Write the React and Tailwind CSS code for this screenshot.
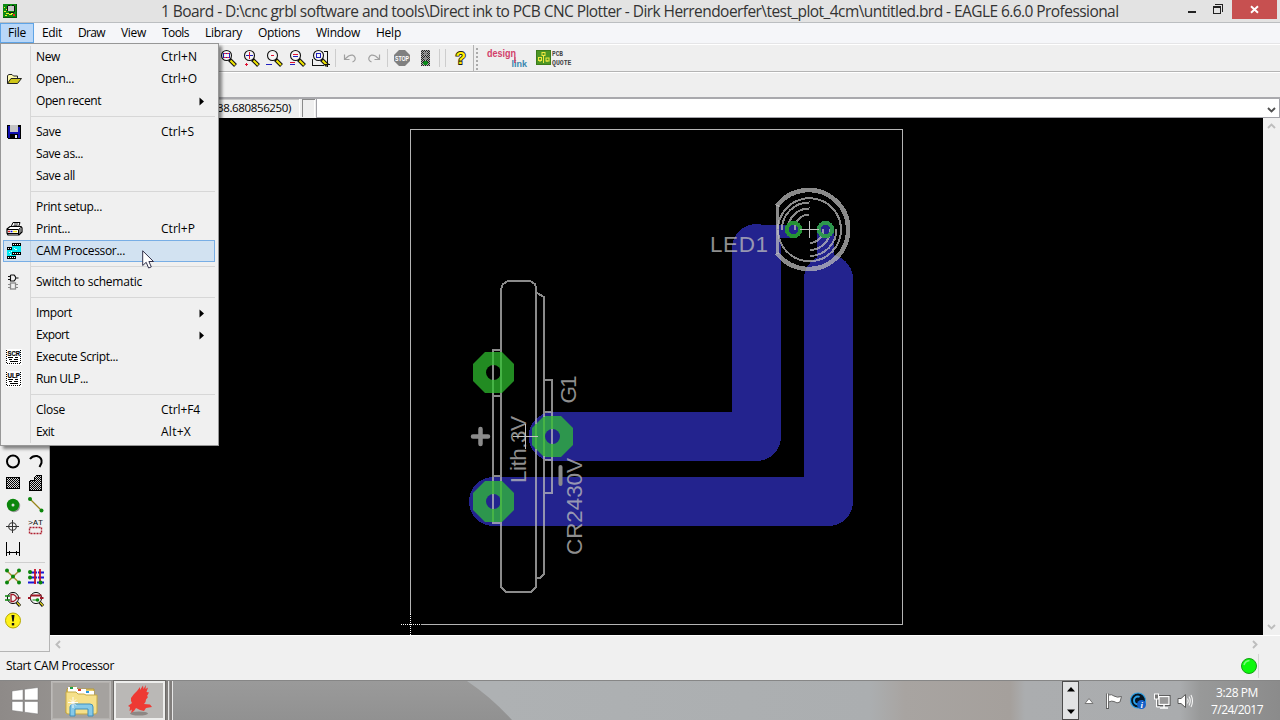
import { useLayoutEffect, useRef } from "react";

// Text stretched or tightened by letter spacing to an exact pixel width.
function Fit({ w, className = "", children }) {
  const ref = useRef(null);
  useLayoutEffect(() => {
    const el = ref.current;
    el.style.letterSpacing = "0px";
    const natural = el.getBoundingClientRect().width;
    el.style.letterSpacing = (w - natural) / String(children).length + "px";
  }, [w, children]);
  return (
    <span ref={ref} className={"inline-block whitespace-pre " + className}>
      {children}
    </span>
  );
}

function Svg({ w = 21, h = 21, crisp = false, className = "", children }) {
  return (
    <svg
      width={w}
      height={h}
      viewBox={`0 0 ${w} ${h}`}
      fill="none"
      shapeRendering={crisp ? "crispEdges" : "auto"}
      className={"block shrink-0 overflow-visible " + className}
    >
      {children}
    </svg>
  );
}

function Checker({ id, a = "#000", b = "#d8d8d8" }) {
  return (
    <pattern id={id} width="2" height="2" patternUnits="userSpaceOnUse">
      <rect width="2" height="2" fill={b} />
      <rect width="1" height="1" fill={a} />
      <rect x="1" y="1" width="1" height="1" fill={a} />
    </pattern>
  );
}

/* ---------- title bar ---------- */
function TitleBar() {
  return (
    <div className="flex h-[23px] shrink-0 border-b border-[#bbbec1] bg-[#e3e3e3]">
      <div className="w-[161px] pl-[3px] pt-[4px]">
        <Svg w={14} h={14} crisp>
          <rect width="14" height="14" fill="#0b8a12" />
          <path d="M0 13.500H14M13.500 0V14" stroke="#045a08" />
          <rect x="5" y="2" width="6" height="5" fill="#c9c9c9" />
          <path d="M4.500 2V7M5 1.500H7M9 1.500H11M11.500 2V8M6 8.500H11" stroke="#111" />
          <path d="M1 3h1v1h-1zM3 5h1v1h-1zM1 7h2v1h-2zM3 9h3v1h-3zM6 10h3v1h-3zM2 11h2v1h-2zM8 9h2v1h-2z" fill="#f4f02a" />
          <rect x="10" y="10" width="2" height="2" fill="#e22" />
        </Svg>
      </div>
      <div className="w-[1027px] text-[15.5px] leading-[23px] text-[#333]">
        <Fit w={957.5}>
          {"1 Board - D:\\cnc grbl software and tools\\Direct ink to PCB CNC Plotter - Dirk Herrendoerfer\\test_plot_4cm\\untitled.brd - EAGLE 6.6.0 Professional"}
        </Fit>
      </div>
      <Svg w={44} h={20} crisp>
        <rect x="0" y="11" width="8" height="2" fill="#222" />
        <path d="M27 4.500H34.500V12" stroke="#222" />
        <rect x="25.500" y="6.500" width="7" height="7" stroke="#222" />
        <rect x="25" y="6" width="8" height="2" fill="#222" />
      </Svg>
      <div className="flex h-[19px] w-[45px] items-center justify-center bg-[#c75050]">
        <Svg w={9} h={9}>
          <path d="M1 1.200L8 7.800M8 1.200L1 7.800" stroke="#fff" strokeWidth="1.900" />
        </Svg>
      </div>
    </div>
  );
}

/* ---------- menu bar ---------- */
const menus = [
  ["File", 34, 18],
  ["Edit", 36, 20],
  ["Draw", 43, 27],
  ["View", 41, 25],
  ["Tools", 43, 27],
  ["Library", 53, 37],
  ["Options", 58, 42],
  ["Window", 60, 44],
  ["Help", 41, 25],
];

function MenuBar() {
  return (
    <div className="flex h-[21px] shrink-0 border-b border-[#e5e5e7] bg-[#f5f6f9] text-[12px]">
      {menus.map(([name, w, tw], i) => (
        <div
          key={name}
          className={
            "flex h-[20px] items-center justify-center " +
            (i === 0 ? "border border-[#5fa4e6] bg-[#b9d7f8]" : "")
          }
          style={{ width: w }}
        >
          <Fit w={tw}>{name}</Fit>
        </div>
      ))}
    </div>
  );
}

/* ---------- toolbar ---------- */
function Lens({ children }) {
  return (
    <Svg w={23} h={21}>
      <g>
        <path d="M12.500 11.500L18.500 17.500" stroke="#111" strokeWidth="4" />
        <path d="M13.500 12.500L18 17" stroke="#f2e600" strokeWidth="1.900" />
        <circle cx="9.500" cy="7.500" r="5" fill="#f4f4f4" stroke="#111" strokeWidth="1.100" />
      </g>
      <g shapeRendering="crispEdges">{children}</g>
    </Svg>
  );
}

function Divider({ className = "" }) {
  return <div className={"h-[18px] w-px shrink-0 bg-[#cdcdcd] " + className} />;
}

function Toolbar() {
  return (
    <div className="flex h-[28px] shrink-0 items-center border-b border-t border-b-[#b4b4b4] border-t-white bg-[#efefef] pl-[217px]">
      <Lens>
        <rect x="6.500" y="5.500" width="6" height="4" stroke="#2020c0" />
        <path d="M7 5.500H12M7 9.500H12" stroke="#e02050" strokeDasharray="2 1" />
      </Lens>
      <Lens>
        <path d="M6 7.500H13" stroke="#2020c0" />
        <path d="M9.500 4V11M5 16.500H8M6.500 15V18" stroke="#e01030" />
      </Lens>
      <Lens>
        <path d="M8 7.500H11" stroke="#e01030" />
        <path d="M3 16.500H9" stroke="#2020c0" />
      </Lens>
      <Lens>
        <path d="M7 6.500H12M4 14.500H9" stroke="#e01030" />
        <path d="M7 8.500H12M4 16.500H9" stroke="#2020c0" />
      </Lens>
      <Lens>
        <path d="M3.500 11V17.500H15M15 3.500H18.500V16" stroke="#111" />
        <rect x="7.500" y="5.500" width="4" height="4" stroke="#2020c0" />
        <path d="M16 16h5v1h-5zM18 14h1v5h-1z" fill="#111" />
      </Lens>
      <Divider className="ml-[3px]" />
      <Svg w={24} h={20} className="ml-[2px]">
        <path d="M6.500 6.500V11.500H11.500M7 11L10.500 8Q15.500 5.500 17 9.500Q18 12.500 14.500 14" stroke="#a0a0a0" strokeWidth="1.200" />
      </Svg>
      <Svg w={24} h={20}>
        <path d="M17.500 6.500V11.500H12.500M17 11L13.500 8Q8.500 5.500 7 9.500Q6 12.500 9.500 14" stroke="#a0a0a0" strokeWidth="1.200" />
      </Svg>
      <Divider className="ml-px" />
      <Svg w={18} h={18} className="ml-[5px]">
        <path d="M6 1H12L17 6V12L12 17H6L1 12V6Z" fill="#808080" />
        <text x="2" y="11.500" fontSize="7" fontWeight="700" textLength="14" lengthAdjust="spacingAndGlyphs" fill="#fff" fontFamily="Liberation Sans, sans-serif">STOP</text>
      </Svg>
      <Svg w={9} h={18} crisp className="ml-[10px]">
        <defs><Checker id="tl" a="#222" b="#aaa" /></defs>
        <rect y="1" width="9" height="16" fill="url(#tl)" />
        <rect x="3" y="3" width="3" height="3" fill="#888" />
        <rect x="3" y="8" width="3" height="3" fill="#888" />
        <path d="M3 12h3v1h1v2h-1v1h-3v-1h-1v-2h1z" fill="#0a8a1a" />
      </Svg>
      <Divider className="ml-[9px]" />
      <Divider className="ml-[5px]" />
      <Svg w={14} h={18} className="ml-[8px]">
        <text x="1.500" y="15" fontSize="17" fontWeight="700" fill="#fff000" stroke="#1a1a1a" strokeWidth="1.800" paintOrder="stroke" fontFamily="Liberation Sans, sans-serif">?</text>
      </Svg>
      <div className="ml-[5px] h-full w-px bg-[#b4b4b4]" />
      <Svg w={4} h={26} crisp className="ml-[2px]">
        <path d="M1 3V25" stroke="#aaa" strokeWidth="2" strokeDasharray="2 2" />
      </Svg>
      <Svg w={44} h={24} className="ml-[7px]">
        <text x="0" y="11" fontSize="11" fontWeight="700" textLength="29" lengthAdjust="spacingAndGlyphs" fill="#d2406a" fontFamily="Liberation Sans, sans-serif">design</text>
        <text x="24.500" y="20.500" fontSize="9.500" fontWeight="700" textLength="15.500" lengthAdjust="spacingAndGlyphs" fill="#3a87b0" fontFamily="Liberation Sans, sans-serif">link</text>
        <path d="M27.900 11V17" stroke="#cd3a63" strokeWidth="1.500" />
      </Svg>
      <Svg w={38} h={18} className="ml-[5px]">
        <rect x="0.500" y="1.500" width="14" height="14" fill="#4c9624" stroke="#3c7c1a" />
        <path d="M4 13V10.500M7.500 14V6M11 13V11" stroke="#f0e840" />
        <rect x="2.500" y="8.500" width="3" height="3" stroke="#f0e840" />
        <rect x="6" y="3.500" width="3" height="3" stroke="#f0e840" />
        <rect x="10" y="9" width="3" height="3" stroke="#f0e840" />
        <text x="16" y="7" fontSize="7" fontWeight="700" textLength="11" lengthAdjust="spacingAndGlyphs" fill="#444" fontFamily="Liberation Mono, monospace">PCB</text>
        <text x="16" y="16" fontSize="7" fontWeight="700" textLength="19.500" lengthAdjust="spacingAndGlyphs" fill="#444" fontFamily="Liberation Mono, monospace">QUOTE</text>
      </Svg>
    </div>
  );
}

function Chevron({ dir, color = "#bdbdbd" }) {
  const d = {
    up: "M1 6L4.500 2.500L8 6",
    down: "M1 3L4.500 6.500L8 3",
    left: "M6 1L2.500 4.500L6 8",
    right: "M3 1L6.500 4.500L3 8",
  }[dir];
  return (
    <Svg w={9} h={9}>
      <path d={d} stroke={color} strokeWidth="1.900" />
    </Svg>
  );
}

function CommandRow() {
  return (
    <div className="flex h-[21px] shrink-0 border-t-2 border-[#a9a9ad] bg-[#efefef] pl-[50px]">
      <div className="flex h-[18px] w-[250px] items-center justify-end border-r border-[#fff] pr-[8px] shadow-[inset_0_1px_#c8c8c8]">
        <Fit w={74} className="text-[11.5px]">38.680856250)</Fit>
      </div>
      <div className="ml-[2px] h-[18px] w-[13px] border-l border-t border-[#8a8a8a] shadow-[inset_-1px_0_#fff]" />
      <div className="ml-px flex h-[19px] flex-1 items-center justify-end border-b border-l border-r border-[#a3a3a9] bg-white pr-[3px] pt-[2px]">
        <Chevron dir="down" color="#505050" />
      </div>
    </div>
  );
}

/* ---------- tool palette ---------- */
function Palette() {
  return (
    <div className="flex w-[50px] shrink-0 flex-col justify-end border-b border-r border-[#b5b5b5] bg-[#f0f0f0] pb-[19px]">
      <div className="grid auto-rows-[22px] grid-cols-[23px_23px] pl-[3px]">
        <Svg><circle cx="10" cy="10.500" r="6" stroke="#000" strokeWidth="2" /></Svg>
        <Svg>
          <path d="M4 8Q6.500 4.500 11 5Q16.500 6.500 15.500 12L13.500 16" stroke="#000" strokeWidth="2" />
        </Svg>
        <Svg crisp>
          <defs><Checker id="ck" /></defs>
          <rect x="3.500" y="4.500" width="13" height="11" fill="url(#ck)" stroke="#000" />
        </Svg>
        <Svg crisp>
          <path d="M3.500 8.500L5.500 7.500H8.500V4.500L10.500 2.500H15.500V17.500H3.500Z" fill="url(#ck)" stroke="#000" />
        </Svg>
        <Svg>
          <circle cx="11" cy="11" r="6.200" fill="#999" />
          <circle cx="10" cy="10" r="6.200" fill="#0c860c" />
          <circle cx="10" cy="10" r="1.500" fill="#ddd" />
        </Svg>
        <Svg>
          <path d="M4 4L15.500 15.500" stroke="#98851a" strokeWidth="1.300" />
          <circle cx="4" cy="4" r="2" fill="#0c860c" />
          <circle cx="15.500" cy="15.500" r="2" fill="#0c860c" />
        </Svg>
        <Svg>
          <circle cx="9.500" cy="9.500" r="3.800" stroke="#333" strokeWidth="1.100" />
          <path d="M3 9.500H16M9.500 3V16" stroke="#333" />
        </Svg>
        <Svg>
          <text x="2" y="8" fontSize="7.500" textLength="15" lengthAdjust="spacingAndGlyphs" fill="#111" fontFamily="Liberation Mono, monospace">&gt;AT</text>
          <rect x="3.500" y="10.500" width="12" height="6" stroke="#b02030" strokeWidth="1.400" strokeDasharray="2 1" />
        </Svg>
        <Svg crisp>
          <path d="M3.500 2.500V16.500M16.500 2.500V16.500M4 13.500H16M6.500 11.500V15.500M13.500 11.500V15.500" stroke="#000" />
        </Svg>
      </div>
      <div className="mb-[3px] ml-[5px] mt-px h-px w-[40px] bg-[#cfcfcf]" />
      <div className="grid auto-rows-[22px] grid-cols-[23px_23px] pl-[2px]">
        <Svg>
          <path d="M5 5L17 16.500M17 5L5 16.500" stroke="#a58b30" strokeWidth="1.400" />
          <g fill="#0c860c">
            <circle cx="5" cy="4.500" r="2" /><circle cx="17" cy="4.500" r="2" />
            <circle cx="11" cy="10.500" r="2" />
            <circle cx="5" cy="16.500" r="2" /><circle cx="17" cy="16.500" r="2" />
          </g>
        </Svg>
        <Svg>
          <path d="M4 6.500H19M4 11.500H19M3 16.500H19" stroke="#1818d8" strokeWidth="1.800" strokeDasharray="8 1" />
          <path d="M10 3V18M15 3V18" stroke="#c8102a" strokeWidth="1.800" />
          <circle cx="5" cy="6" r="2" fill="#0c860c" /><circle cx="5" cy="11.500" r="2" fill="#0c860c" /><circle cx="15.500" cy="16.500" r="2" fill="#0c860c" />
        </Svg>
        <Svg>
          <path d="M14.500 14L18 18" stroke="#111" strokeWidth="3" /><path d="M15 14.500L18 17.500" stroke="#e8d820" strokeWidth="1.300" />
          <circle cx="11" cy="10" r="5.600" fill="#f4f4f4" stroke="#111" />
          <path d="M3 8H8M3 12H8" stroke="#0c860c" strokeWidth="1.400" />
          <path d="M9 6.500H11.500Q14.500 8 14.500 10Q14.500 12 11.500 13.500H9ZM14.500 10H18.500" stroke="#a01828" strokeWidth="1.300" />
        </Svg>
        <Svg>
          <path d="M14.500 14L18 18" stroke="#111" strokeWidth="3" /><path d="M15 14.500L18 17.500" stroke="#e8d820" strokeWidth="1.300" />
          <circle cx="11" cy="10" r="5.600" fill="#f4f4f4" stroke="#111" />
          <path d="M5.500 7.500H16.500M3 10H6M15 10H18.500" stroke="#a01828" strokeWidth="2" />
          <circle cx="12.500" cy="12" r="1.800" fill="#0c860c" /><path d="M7.500 12H12" stroke="#0c860c" />
        </Svg>
        <Svg>
          <circle cx="11" cy="10.500" r="7.500" fill="#fff21a" stroke="#b5a800" />
          <path d="M9.500 5H12.500L11.700 11.500H10.300Z" fill="#111" />
          <rect x="9.800" y="13" width="2.400" height="2.400" fill="#111" />
        </Svg>
      </div>
    </div>
  );
}

/* ---------- board drawing ---------- */
function octagon(cx, cy, r) {
  const k = r * 0.4142;
  return [[-k, -r], [k, -r], [r, -k], [r, k], [k, r], [-k, r], [-r, k], [-r, -k]]
    .map(([x, y]) => `${cx + x},${cy + y}`)
    .join(" ");
}

function Pad({ x, y, fill, hole }) {
  return (
    <g>
      <polygon points={octagon(x, y, 20.5)} fill={fill} />
      <circle cx={x} cy={y} r="7.500" fill={hole} />
    </g>
  );
}

function Label({ x, y, w, turn = true, children }) {
  return (
    <text
      transform={`translate(${x} ${y})` + (turn ? " rotate(-90)" : "")}
      fontSize="22.500"
      textLength={w}
      fill="#bebebe"
      fillOpacity="0.750"
      fontFamily="Liberation Sans, sans-serif"
    >
      {children}
    </text>
  );
}

function Board() {
  return (
    <svg width="1213" height="517" viewBox="50 118 1213 517" fill="none" className="block shrink-0 bg-black">
      <rect x="410.500" y="129.500" width="492" height="495" stroke="#b4b4b4" />
      <g stroke="#23238e" strokeLinecap="round" strokeLinejoin="round" shapeRendering="crispEdges">
        <path d="M553 436.500H756.500V248.500" strokeWidth="49" />
        <path d="M493.500 501.500H828.500V279" strokeWidth="49" />
        <path d="M757 231.500H793" strokeWidth="13" />
        <path d="M825.500 230V279" strokeWidth="17" />
      </g>

      <Pad x={493.5} y={372.5} fill="#228b22" hole="#000" />
      <Pad x={552.5} y={436.5} fill="#2d964d" hole="#23238e" />
      <Pad x={493.5} y={501.5} fill="#2d964d" hole="#23238e" />

      <g stroke="#bebebe" strokeOpacity="0.730" strokeWidth="2" shapeRendering="crispEdges">
        <path d="M501 289L503 284L508 281H530L535 284L536 288V587L531 592H506L501 587Z" />
        <path d="M537 293L544 297V574L540 578H537" />
        <path d="M500 350H493V523H500M494 396H500M494 476H500" />
        <path d="M545 380H552V493H545M545 412H551M545 460H551" />
      </g>
      <g stroke="#46b446" strokeWidth="2" shapeRendering="crispEdges">
        <path d="M493 352V365M493 380V393M501 352V393" />
        <path d="M493 481V494M493 509V522M501 481V522" />
        <path d="M536 424V449M544 417V456M552 416V429M552 444V457" />
      </g>
      <g stroke="#8b8b8b" strokeLinecap="round">
        <path d="M473 436.500H488M480.500 429V444" strokeWidth="4.500" />
        <path d="M560.500 467V484" strokeWidth="4" />
      </g>
      <path d="M513 436.500H538M525.500 424V449" stroke="#c4c4c4" shapeRendering="crispEdges" />

      <Label x={526} y={483} w={67}>Lith.3V</Label>
      <Label x={576} y={403.500} w={28}>G1</Label>
      <Label x={582} y={555} w={97}>CR2430V</Label>
      <Label x={710} y={252} w={58} turn={false}>LED1</Label>

      <g stroke="#bebebe" strokeOpacity="0.730" shapeRendering="crispEdges">
        <path d="M777 206A39.500 39.500 0 1 1 777 253" strokeWidth="4.500" />
        <path d="M777 205V254" strokeWidth="3" />
        <path d="M778 229.500A31.500 31.500 0 1 1 778 230" strokeWidth="2" />
        <path d="M782 230A27 27 0 0 1 809.500 202.500M788 230A21 21 0 0 1 809.500 208.500M794.500 230A15 15 0 0 1 809.500 214.500" strokeWidth="2" />
        <path d="M836.500 229A27 27 0 0 1 809.500 256M830.500 229A21 21 0 0 1 809.500 250M823.500 229A14 14 0 0 1 809.500 243" strokeWidth="2" />
      </g>
      <circle cx="793.500" cy="229.500" r="6.700" stroke="#259235" strokeWidth="3.800" shapeRendering="crispEdges" />
      <circle cx="825.500" cy="229.500" r="6.700" stroke="#2d964d" strokeWidth="3.800" shapeRendering="crispEdges" />
      <path d="M800 229.500H819M809.500 221V238" stroke="#c4c4c4" shapeRendering="crispEdges" />
      <path d="M401 624.500H421M410.500 614V635" stroke="#000" shapeRendering="crispEdges" />
      <path d="M401 624.500H421M410.500 614V635" stroke="#fff" strokeDasharray="1 1" shapeRendering="crispEdges" />
    </svg>
  );
}

function Workspace() {
  return (
    <div className="flex flex-1 flex-col">
      <div className="flex h-[517px]">
        <Board />
        <div className="flex w-[17px] flex-col items-center justify-between bg-[#f0f0f0] py-[4px]">
          <Chevron dir="up" />
          <Chevron dir="down" />
        </div>
      </div>
      <div className="flex h-[17px] items-center justify-between border-t border-white bg-[#f0f0f0] pl-[4px] pr-[21px]">
        <Chevron dir="left" />
        <Chevron dir="right" />
      </div>
    </div>
  );
}

function StatusBar() {
  return (
    <div className="flex h-[28px] shrink-0 items-center justify-between bg-[#f0f0f0] pl-[6px] pr-[21px]">
      <Fit w={108} className="text-[12px]">Start CAM Processor</Fit>
      <div className="flex h-[24px] items-center border-r border-[#d5d5d5]">
        <Svg w={18} h={18}>
          <circle cx="9" cy="9" r="7.500" fill="#0cf80c" stroke="#16a016" />
          <path d="M4 8Q5 4 9.500 3.500" stroke="#7dff7d" strokeWidth="1.500" />
        </Svg>
      </div>
    </div>
  );
}

/* ---------- task bar ---------- */
function Taskbar() {
  return (
    <div className="flex h-[40px] shrink-0 border-t border-[#868686] bg-[linear-gradient(90deg,#8e8a88_0px,#9b9895_110px,#989796_172px,#aeb1b3_300px,#aeb1b3_494px,#abaeb0_870px,#a8a4a1_905px,#a5a09c_1010px,#abadaf_1025px,#aaacae_1180px,#989999_1200px,#8b8b8b_1280px)]">
      <div className="flex w-[51px] items-center pl-[11px]">
        <Svg w={28} h={28}>
          <path d="M1 4L12 2.500V13H1ZM13.500 2.300L27 0.500V13H13.500ZM1 14.500H12V25L1 23.500ZM13.500 14.500H27V27L13.500 25.200Z" fill="#fff" stroke="#777" strokeWidth="0.500" />
        </Svg>
      </div>
      <div className="flex w-[60px] items-center justify-center border border-[#bcbab8] bg-[#a5a29f] shadow-[inset_0_0_0_1px_#b4b1ae]">
        <Svg w={34} h={32}>
          <path d="M3 4L5 2H12L14 4H30V28H2Z" fill="#e8cc66" stroke="#b59a3a" />
          <path d="M4 2H13V7H4Z" fill="#fff" /><rect x="6" y="2" width="3" height="2" fill="#18a048" />
          <path d="M12 4H22V9H12Z" fill="#fff" /><rect x="14" y="4" width="3" height="2" fill="#d83828" />
          <path d="M20 6H30V10H20Z" fill="#fff" /><rect x="22" y="6" width="3" height="2" fill="#2898e0" />
          <path d="M2 7H12L14 9H20L22 10H33V27Q33 29 31 29H4Q2 29 2 27Z" fill="#f6e08a" stroke="#c7a944" />
          <path d="M6 31V22Q6 19 9 19H26Q29 19 29 22V31H24V24H11V31Z" fill="#85c9e8" stroke="#3f8fbd" />
          <path d="M9 12V23M4 17.500H14M6 14.500L12 20.500M12 14.500L6 20.500" stroke="#fff" strokeWidth="0.900" />
        </Svg>
      </div>
      <div className="ml-[3px] flex w-[51px] items-center justify-center border-2 border-[#ededec] bg-[#bab8b6] shadow-[0_0_0_1px_#6c6a68]">
        <Svg w={26} h={34}>
          <ellipse cx="12" cy="29.500" rx="9" ry="2" fill="#8d8784" />
          <path d="M4 14L7 10L10 7L13 3L13 6L16 1.500L16.500 5L19 1L18.500 5L21 3.500L19.500 8L22 8.500L20 12L21 13L19 15.500L18.500 18L17 20L23 20.500L25 23L19 24L17 27L13 26L9 24L7 27L4 29L5 25.500L2.500 27L3 23L1 22L5 19L4 17Z" fill="#ee3a34" />
        </Svg>
      </div>
      <div className="ml-px w-[3px] border-r border-[#e6e6e6] bg-[#817e7c]" />
      <div className="ml-px w-[3px] border-r border-[#e6e6e6] bg-[#817e7c]" />
      <div className="flex-1">
        <Svg w={345} h={39}>
          <defs>
            <linearGradient id="shade" x1="0" y1="0" x2="0" y2="1">
              <stop offset="0" stopColor="#9a9a9a" />
              <stop offset="1" stopColor="#919191" />
            </linearGradient>
          </defs>
          <path d="M0 0H294Q318 16 339 39H0Z" fill="url(#shade)" />
        </Svg>
      </div>
      <div className="flex w-[17px] shrink-0 flex-col items-center justify-between border border-[#4c4c4c] bg-[#e2e3e4] py-[4px]">
        <Svg w={8} h={6}><path d="M0 5.500H8L4 1Z" fill="#000" /></Svg>
        <Svg w={8} h={6}><path d="M0 0.500H8L4 5Z" fill="#000" /></Svg>
      </div>
      <div className="flex w-[116px] shrink-0 items-center pl-[5px]">
        <Svg w={10} h={8}><path d="M1 6.500H9L5 1.500Z" fill="#fff" stroke="#777" /></Svg>
        <Svg w={18} h={18} className="ml-[11px]">
          <path d="M2.500 1.500V17" stroke="#5b5b5b" strokeWidth="3" />
          <path d="M3.500 3Q7 2 9 4Q12 6 16.500 4.500L15 10Q12 12 9 9.500Q7 8.500 3.500 10Z" fill="#fff" stroke="#666" />
          <path d="M2.500 1.500V16" stroke="#fff" strokeWidth="1.200" />
        </Svg>
        <Svg w={18} h={18} className="ml-[6px]">
          <circle cx="9" cy="8.500" r="7.500" fill="#061522" stroke="#2aa0e8" strokeWidth="1.200" />
          <circle cx="9" cy="8.500" r="4" stroke="#2aa0e8" strokeWidth="2" strokeDasharray="20 4" />
          <circle cx="12.500" cy="12.500" r="4.500" fill="#1560c8" />
          <text x="11.500" y="15.500" fontSize="9" fontWeight="700" fontStyle="italic" fill="#fff" fontFamily="Liberation Serif, serif">i</text>
        </Svg>
        <Svg w={18} h={18} className="ml-[6px]">
          <rect x="6" y="4.500" width="10" height="8" fill="#8b8b8b" stroke="#444" strokeWidth="3" />
          <rect x="6" y="4.500" width="10" height="8" fill="#999" stroke="#fff" strokeWidth="1.300" />
          <path d="M11 13V16M7 16H15" stroke="#fff" strokeWidth="1.500" />
          <rect x="1.500" y="2" width="4" height="5" fill="#777" stroke="#fff" /><path d="M3.500 7V15H7" stroke="#fff" />
        </Svg>
        <Svg w={18} h={18} className="ml-[6px]">
          <path d="M1 6.500H4L8.500 2.500V15.500L4 11.500H1Z" fill="#fff" stroke="#5b5b5b" />
          <path d="M10.500 6.500Q12 9 10.500 11.500M12 4.500Q14.500 9 12 13.500M14 3Q17 9 14 15" stroke="#f4f4f4" strokeWidth="1.100" />
        </Svg>
      </div>
      <div className="flex w-[85px] shrink-0 flex-col items-center pr-px pt-[3px] text-[12px] leading-[17px] text-white">
        <Fit w={42}>3:28 PM</Fit>
        <Fit w={52}>7/24/2017</Fit>
      </div>
    </div>
  );
}

/* ---------- File menu ---------- */
function ScriptIcon({ name }) {
  return (
    <Svg w={16} h={16} crisp>
      <rect width="16" height="16" fill="#fff" />
      <path d="M0.500 1V15M14.500 1V15" stroke="#000" strokeDasharray="1 1" />
      <path d="M1 14.500H15" stroke="#000" strokeDasharray="1 1" />
      <path d="M2 8.500H7M9 8.500H12M3 10.500H6M8 10.500H12M4 12.500H12" stroke="#000" />
      <text x="1.500" y="7" fontSize="8" fontWeight="700" textLength="12.500" lengthAdjust="spacingAndGlyphs" fill="#000" stroke="#000" strokeWidth="0.200" fontFamily="Liberation Sans, sans-serif">{name}</text>
    </Svg>
  );
}

const icons = {
  open: (
    <Svg w={16} h={16}>
      <path d="M1.500 12.500V4.500L3 3.500H6L7.500 5H11.500V7" fill="#fffbb0" stroke="#222" />
      <path d="M1.500 12.500L5 7.500H15.500L11.500 12.500Z" fill="#cfc618" stroke="#222" />
    </Svg>
  ),
  save: (
    <Svg w={16} h={16} crisp>
      <path d="M1 1H15V15H2L1 14Z" fill="#000" />
      <path d="M2 2H4V14H2ZM12 3H14V14H12ZM3 8H13V10H3Z" fill="#1010b0" />
      <rect x="4" y="1" width="8" height="7" fill="#c4c4c4" />
      <rect x="5" y="11" width="7" height="4" fill="#000" />
      <rect x="9" y="11" width="2" height="3" fill="#eee" />
    </Svg>
  ),
  print: (
    <Svg w={17} h={16}>
      <path d="M5 6L7 1.500H14L12.500 6" fill="#fff" stroke="#000" />
      <path d="M8 3H12M7.500 4.700H11.500" stroke="#000" strokeWidth="0.800" />
      <path d="M1 8L4 5.500H15L16 7V11L13 14H2L1 12Z" fill="#fff" stroke="#000" strokeWidth="1.200" />
      <path d="M1 8.500H12.500L15 6.500M12.500 9V14M1 12.500H12M14 8V13" stroke="#000" />
      <path d="M2 10.500H4" stroke="#e02020" strokeWidth="1.500" /><path d="M4.500 10.500H6.500" stroke="#1010d0" strokeWidth="1.500" /><path d="M7 10.500H11" stroke="#f0e020" strokeWidth="1.500" />
    </Svg>
  ),
  cam: (
    <Svg w={16} h={16} crisp>
      <path d="M1 5H6V3H15V10H10V13H1Z" fill="#00e8f0" />
      <path d="M6 0H15V3H6ZM1 4H6V7H1ZM6 9H15V12H6ZM1 13H10V16H1Z" fill="#000" />
      <path d="M7 1.500H14M7 10.500H14M2 14.500H9M2 5.500H5" stroke="#fff" strokeDasharray="1 1" />
      <path d="M3 9h1v1h-1zM5 8h1v1h-1zM9 6h2v1h-2zM8 5h1v1h-1zM4 11h1v1h-1z" fill="#d8ffff" />
    </Svg>
  ),
  schematic: (
    <Svg w={16} h={16}>
      <path d="M4.500 1V7H8Q11.500 4 8 1H4.500M2 2.500H4M2 5.500H4M10 4H12.500" stroke="#111" strokeWidth="1.100" />
      <rect x="4.500" y="9" width="5" height="6" stroke="#8a8a8a" strokeWidth="1.300" />
      <path d="M2 10.500H4M2 13.500H4M10 10.500H12M10 13.500H12" stroke="#8a8a8a" />
    </Svg>
  ),
  scr: <ScriptIcon name="SCR" />,
  ulp: <ScriptIcon name="ULP" />,
};

const entries = [
  { t: "New", w: 24, k: "Ctrl+N", kw: 36 },
  { t: "Open...", w: 38, k: "Ctrl+O", kw: 36, i: "open" },
  { t: "Open recent", w: 65, sub: true },
  null,
  { t: "Save", w: 25, k: "Ctrl+S", kw: 33, i: "save" },
  { t: "Save as...", w: 47 },
  { t: "Save all", w: 39 },
  null,
  { t: "Print setup...", w: 66 },
  { t: "Print...", w: 34, k: "Ctrl+P", kw: 34, i: "print" },
  { t: "CAM Processor...", w: 89, i: "cam", on: true },
  null,
  { t: "Switch to schematic", w: 106, i: "schematic" },
  null,
  { t: "Import", w: 36, sub: true },
  { t: "Export", w: 33, sub: true },
  { t: "Execute Script...", w: 82, i: "scr" },
  { t: "Run ULP...", w: 52, i: "ulp" },
  null,
  { t: "Close", w: 29, k: "Ctrl+F4", kw: 39 },
  { t: "Exit", w: 18, k: "Alt+X", kw: 30 },
];

function FileMenu() {
  return (
    <div className="absolute left-0 top-[43px] w-[219px] border border-[#979797] bg-[#f0f0f0] py-[2px] pl-[2px] pr-[3px] text-[12px] shadow-[3px_3px_3px_rgba(0,0,0,0.45)]">
      <div className="bg-[linear-gradient(90deg,transparent_27px,#d7d7d7_27px,#d7d7d7_28px,transparent_28px)]">
        {entries.map((e, n) =>
          e === null ? (
            <div key={n} className="h-[9px] pl-[28px] pt-[4px]">
              <div className="h-px bg-[#d7d7d7]" />
            </div>
          ) : (
            <div
              key={n}
              className={
                "flex h-[22px] items-center " +
                (e.on ? "bg-[rgba(120,185,245,0.25)] shadow-[inset_0_0_0_1px_#78aee5]" : "")
              }
            >
              <div className="flex w-[33px] pl-[3px]">{e.i && icons[e.i]}</div>
              <div className="w-[125px]"><Fit w={e.w}>{e.t}</Fit></div>
              {e.k && <Fit w={e.kw}>{e.k}</Fit>}
              {e.sub && (
                <Svg w={6} h={9} className="ml-[38px]"><path d="M0.500 0.500L5 4.500L0.500 8.500Z" fill="#000" /></Svg>
              )}
            </div>
          )
        )}
      </div>
    </div>
  );
}

function Cursor() {
  return (
    <div className="absolute left-[142px] top-[250px]">
      <Svg w={13} h={20}>
        <path d="M0.700 0.800V15.500L4.200 12.300L6.600 18L9.300 16.900L6.900 11.500H11.500Z" fill="#fff" stroke="#30304a" />
      </Svg>
    </div>
  );
}

export default function App() {
  return (
    <div className="relative flex h-[720px] w-[1280px] flex-col overflow-hidden bg-[#f0f0f0] font-['Open_Sans','Noto_Sans',sans-serif] text-black">
      <TitleBar />
      <MenuBar />
      <Toolbar />
      <div className="h-[25px] shrink-0 border-t border-white bg-[#efefef]" />
      <CommandRow />
      <div className="flex h-[534px] shrink-0">
        <Palette />
        <Workspace />
      </div>
      <StatusBar />
      <Taskbar />
      <FileMenu />
      <Cursor />
    </div>
  );
}
